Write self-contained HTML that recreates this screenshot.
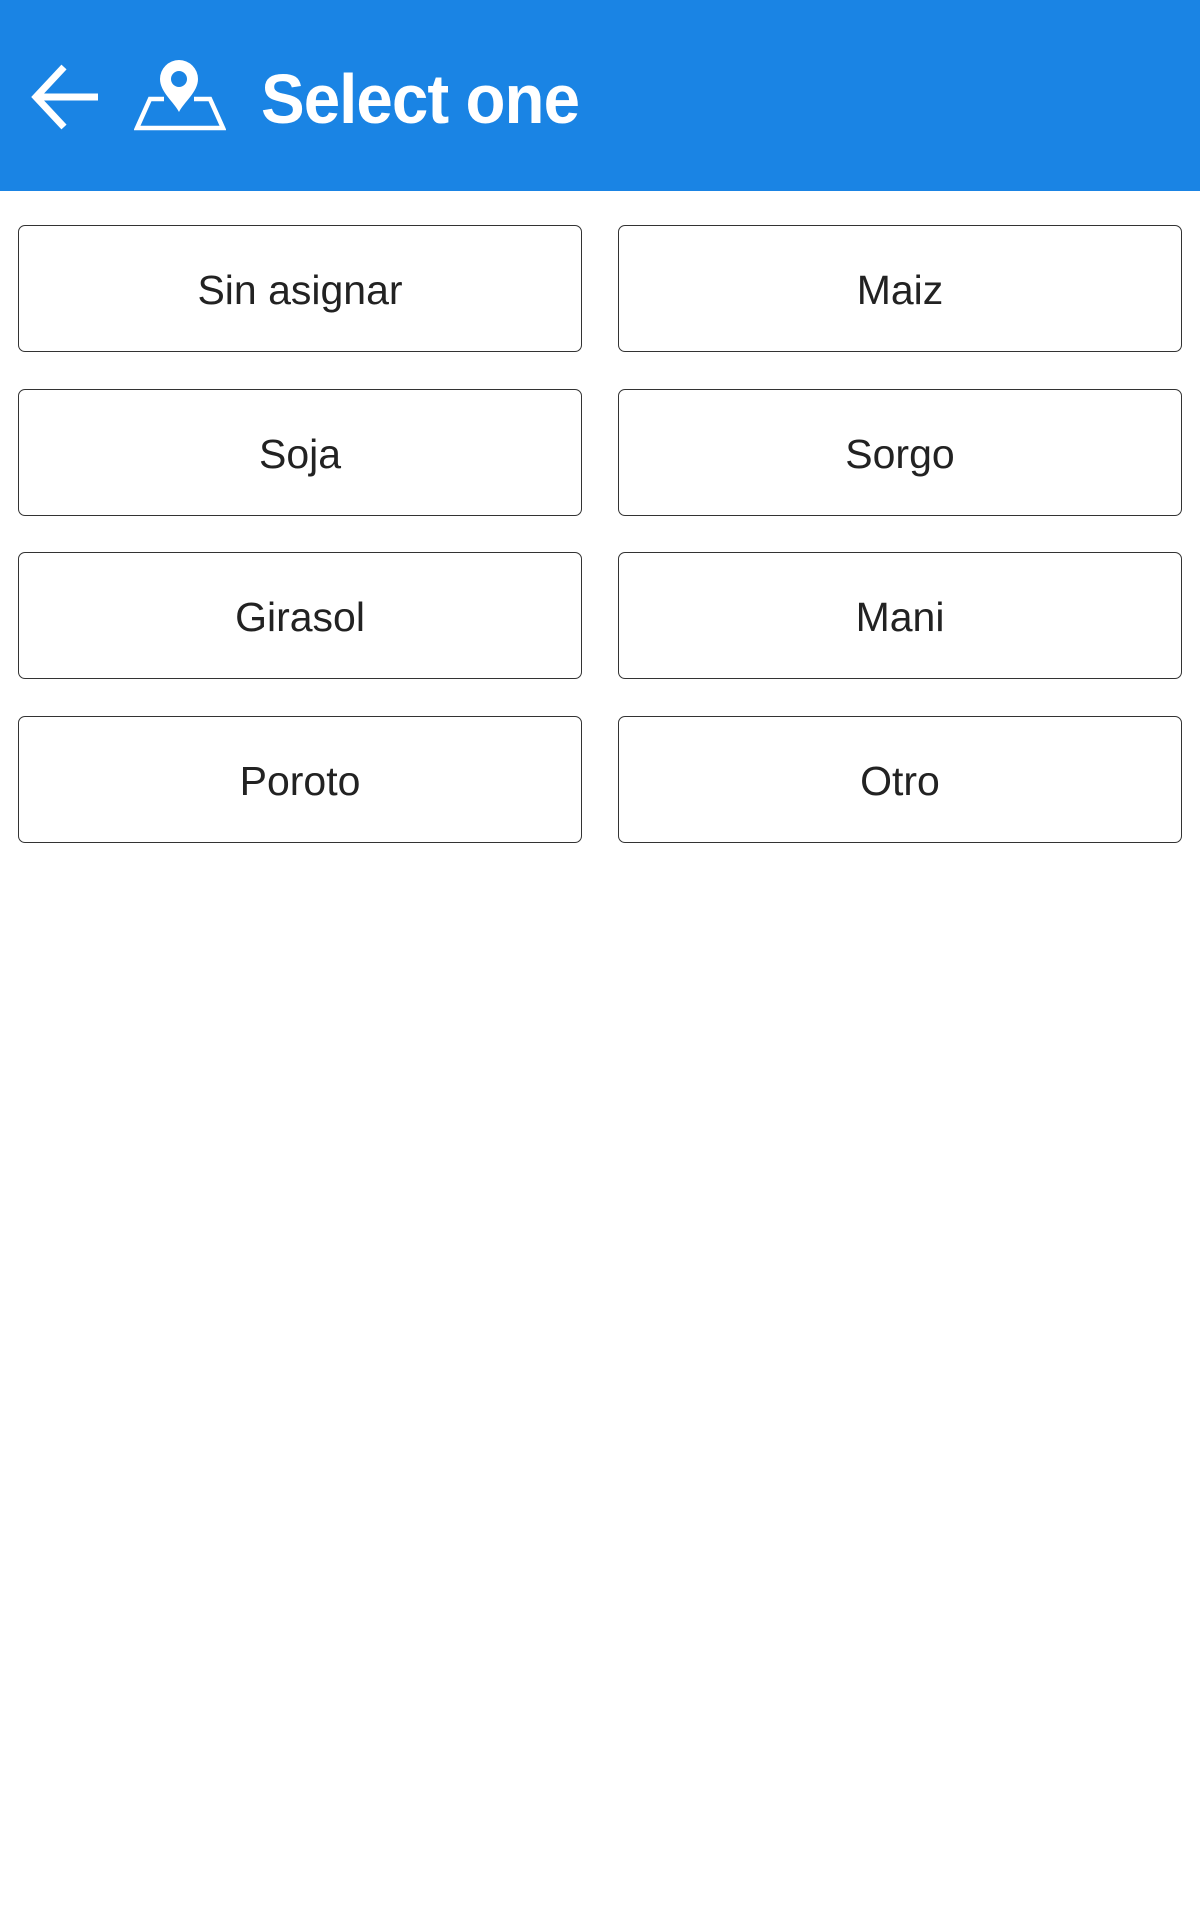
<!DOCTYPE html>
<html><head><meta charset="utf-8"><style>
body{margin:0;width:1200px;height:1920px;background:#fff;font-family:"Liberation Sans",sans-serif;position:relative;overflow:hidden}
.hdr{position:absolute;left:0;top:0;width:1200px;height:191px;background:#1a84e4}
.title{position:absolute;left:261px;top:56px;font-size:70px;font-weight:bold;color:#fff;line-height:86px;letter-spacing:-1px;transform:scaleX(0.935);transform-origin:left}
.b{position:absolute;width:564px;height:127px;border:1.5px solid #333;border-radius:7px;box-sizing:border-box;display:flex;align-items:center;justify-content:center;font-size:41px;color:#222;padding-top:4px}
</style></head><body>
<div class="hdr">
<svg style="position:absolute;left:30px;top:62px" width="72" height="70" viewBox="0 0 72 70"><path d="M34 5 L6 35 L34 65 M6 35 H68" stroke="#fff" stroke-width="7" fill="none"/></svg>
<svg style="position:absolute;left:134px;top:60px" width="92" height="72" viewBox="0 0 92 72">
<path d="M45 52 C40 42 26 32 26 19 A19 19 0 0 1 64 19 C64 32 50 42 45 52Z" fill="#fff"/>
<circle cx="45" cy="19" r="8" fill="#1a84e4"/>
<path d="M30 39 H16 L3 68 H89 L76 39 H60" stroke="#fff" stroke-width="4.5" fill="none"/>
</svg>
<div class="title">Select one</div>
</div>
<div class="b" style="left:18px;top:225px">Sin asignar</div>
<div class="b" style="left:618px;top:225px">Maiz</div>
<div class="b" style="left:18px;top:389px">Soja</div>
<div class="b" style="left:618px;top:389px">Sorgo</div>
<div class="b" style="left:18px;top:552px">Girasol</div>
<div class="b" style="left:618px;top:552px">Mani</div>
<div class="b" style="left:18px;top:716px">Poroto</div>
<div class="b" style="left:618px;top:716px">Otro</div>
</body></html>
